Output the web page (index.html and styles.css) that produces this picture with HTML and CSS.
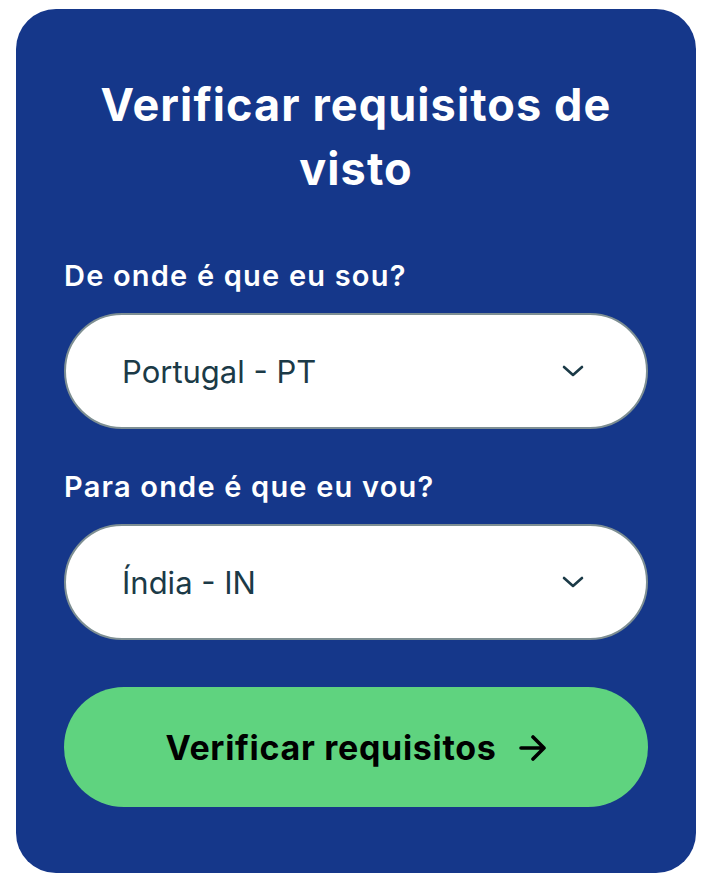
FILE: index.html
```html
<!DOCTYPE html>
<html lang="pt">
<head>
    <meta charset="UTF-8" />
    <meta name="viewport" content="width=device-width, initial-scale=1.0"/>
    <title>Verificar requisitos de visto</title>
    <link rel="stylesheet" href="styles.css">
</head>
<body>

    <div class="visa-card">
        <h1 class="visa-title">Verificar requisitos de visto</h1>

        <div class="field">
            <label class="field-label">De onde é que eu sou?</label>
            <div class="fake-select">
                <span class="select-value">Portugal - PT</span>
                <svg class="chevron" width="22" height="12" viewBox="0 0 22 12">
                    <path d="M2 2 L11 10 L20 2" fill="none" stroke="#1b3a47" stroke-width="2.6" stroke-linecap="round" stroke-linejoin="round"/>
                </svg>
            </div>
        </div>

        <div class="field">
            <label class="field-label">Para onde é que eu vou?</label>
            <div class="fake-select">
                <span class="select-value">Índia - IN</span>
                <svg class="chevron" width="22" height="12" viewBox="0 0 22 12">
                    <path d="M2 2 L11 10 L20 2" fill="none" stroke="#1b3a47" stroke-width="2.6" stroke-linecap="round" stroke-linejoin="round"/>
                </svg>
            </div>
        </div>

        <button class="check-btn">
            Verificar requisitos
            <svg class="arrow" width="28" height="26" viewBox="0 0 28 26">
                <path d="M2 13 H25 M14 2 L25 13 L14 24" fill="none" stroke="#000" stroke-width="3.6" stroke-linecap="round" stroke-linejoin="round"/>
            </svg>
        </button>
    </div>

</body>
</html>
```

FILE: styles.css
```css
body {
    margin: 0;
    background: #ffffff;
    font-family: Inter, "Noto Sans", sans-serif;
}

.visa-card {
    margin: 9px 20px 0 16px;
    width: 680px;
    height: 864px;
    box-sizing: border-box;
    background: #15378a;
    border-radius: 40px;
    padding: 64px 48px 0 48px;
    display: flex;
    flex-direction: column;
}

.visa-title {
    margin: 0 0 58px 0;
    color: #fff;
    text-align: center;
    font-size: 45px;
    line-height: 64px;
    font-weight: 700;
    letter-spacing: 1.1px;
    padding: 0 20px;
}

.field {
    display: flex;
    flex-direction: column;
    margin-bottom: 41px;
}

.field-label {
    color: #fff;
    font-size: 29px;
    font-weight: 600;
    line-height: 34px;
    letter-spacing: 1.2px;
    margin-bottom: 20px;
}

.fake-select {
    height: 116px;
    box-sizing: border-box;
    background: #fff;
    border: 2px solid #7e8f93;
    border-radius: 58px;
    display: flex;
    align-items: center;
    justify-content: space-between;
    padding: 0 62px 0 56px;
}

.select-value {
    color: #1b3a47;
    font-size: 31px;
    font-weight: 400;
}

.check-btn {
    margin-top: 6px;
    height: 120px;
    border: none;
    border-radius: 60px;
    background: #5fd37f;
    color: #000;
    font-family: Inter, "Noto Sans", sans-serif;
    font-size: 34px;
    font-weight: 700;
    letter-spacing: 0.7px;
    display: flex;
    align-items: center;
    justify-content: center;
    gap: 22px;
}

.arrow {
    margin-top: 2px;
}
```
